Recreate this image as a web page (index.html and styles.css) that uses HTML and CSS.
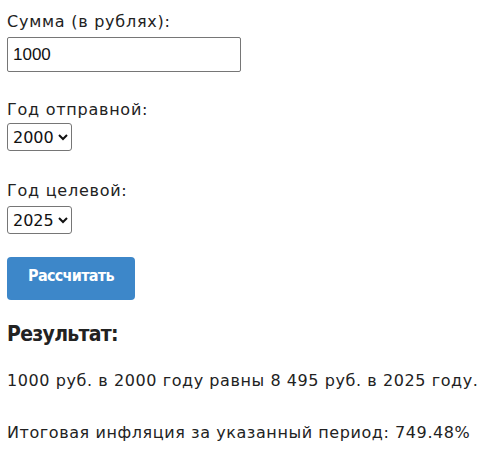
FILE: index.html
```html
<!DOCTYPE html>
<html lang="ru">
<head>
<meta charset="utf-8">
<title>Калькулятор инфляции</title>
<link rel="stylesheet" href="styles.css">
</head>
<body>
<form class="calc">
  <label class="lbl" for="sum">Сумма (в рублях):</label>
  <input class="inp" id="sum" type="text" value="1000">
  <label class="lbl lbl-from" for="from">Год отправной:</label>
  <select class="sel" id="from"><option>2000</option></select>
  <label class="lbl lbl-to" for="to">Год целевой:</label>
  <select class="sel sel-to" id="to"><option>2025</option></select>
  <button class="btn" type="button">Рассчитать</button>
</form>
<section class="result">
  <h3 class="res-title">Результат:</h3>
  <p class="res-line">1000 руб. в 2000 году равны 8 495 руб. в 2025 году.</p>
  <p class="res-line res-line2">Итоговая инфляция за указанный период: 749.48%</p>
</section>
</body>
</html>
```
FILE: styles.css
```css
html, body { margin: 0; padding: 0; background: #fff; }
body {
  padding: 10px 7px 0;
  font-family: "DejaVu Sans", sans-serif;
  font-size: 16px;
  color: #222;
  letter-spacing: 0.58px;
}
.calc {
  display: flex;
  flex-direction: column;
  align-items: flex-start;
}
.lbl { display: block; line-height: 24px; letter-spacing: 0.75px; }
.lbl-from { margin-top: 26px; }
.lbl-to { margin-top: 28px; }
.inp {
  margin: 3px 0 0;
  box-sizing: border-box;
  width: 234px;
  height: 35px;
  padding: 0 5px;
  border: 1px solid #767676;
  border-radius: 2px;
  font-family: "Liberation Sans", Arial, sans-serif;
  font-size: 17px;
  color: #111;
  letter-spacing: 0;
  background: #fff;
}
.sel {
  margin: 1px 0 0;
  box-sizing: border-box;
  width: 65px;
  height: 28px;
  font-family: "DejaVu Sans", sans-serif;
  font-size: 16px;
  color: #111;
  border: 1px solid #767676;
  border-radius: 3px;
  background: #fff;
  padding: 0 0 0 1px;
  letter-spacing: 0;
}
.sel-to { margin-top: 3px; }
.btn {
  margin-top: 23px;
  box-sizing: border-box;
  width: 128px;
  height: 43px;
  border: 0;
  border-radius: 4px;
  background: #3d87c9;
  color: #fff;
  font-family: "DejaVu Sans Condensed", "DejaVu Sans", sans-serif;
  font-stretch: condensed;
  font-weight: bold;
  font-size: 16px;
  letter-spacing: -0.7px;
  padding: 0 0 6px;
}
.result { margin: 0; }
.res-title {
  margin: 22px 0 0;
  font-family: "DejaVu Sans Condensed", "DejaVu Sans", sans-serif;
  font-stretch: condensed;
  font-size: 21px;
  line-height: 25px;
  font-weight: bold;
  letter-spacing: -0.7px;
}
.res-line { margin: 22px 0 0; line-height: 24px; }
.res-line2 { margin-top: 28px; }
```
